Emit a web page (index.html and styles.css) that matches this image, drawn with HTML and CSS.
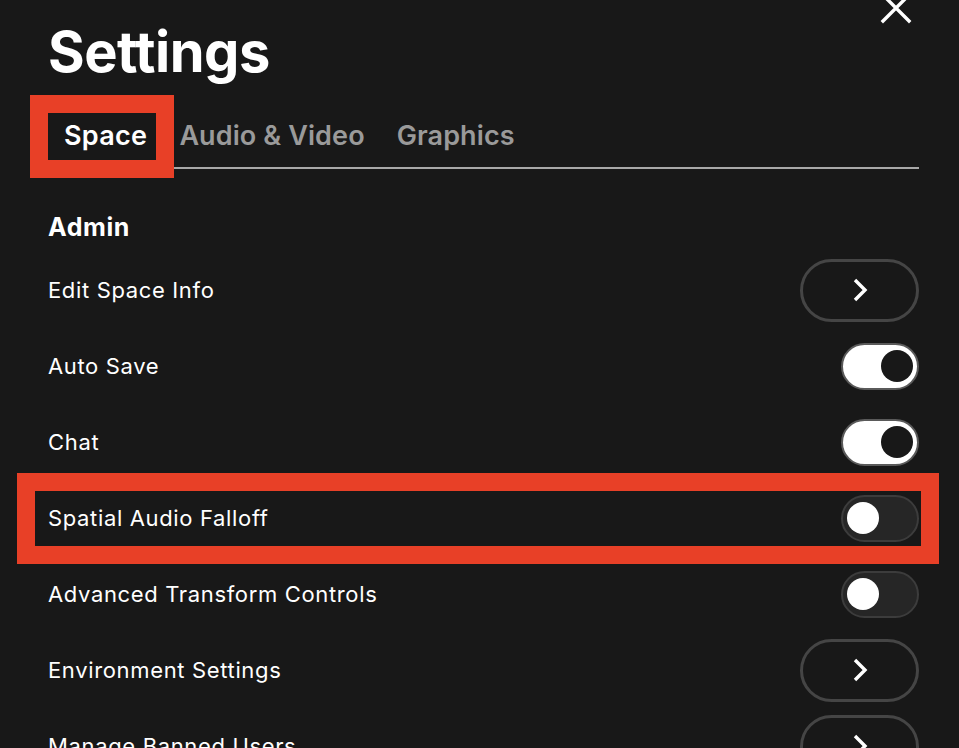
FILE: index.html
```html
<!DOCTYPE html>
<html lang="en">
<head>
<meta charset="utf-8">
<title>Settings</title>
<link rel="stylesheet" href="styles.css">
</head>
<body>
<div class="panel">
  <header class="header">
    <h1 class="title">Settings</h1>
    <button class="close" aria-label="Close">
      <svg viewBox="0 0 32 32" width="32" height="32"><path d="M3 3 L29 29 M29 3 L3 29" stroke="#fff" stroke-width="3.4" stroke-linecap="square" fill="none"/></svg>
    </button>
  </header>
  <nav class="tabs">
    <span class="tab tab-active">Space</span>
    <span class="tab">Audio &amp; Video</span>
    <span class="tab">Graphics</span>
    <div class="mark mark-tab"></div>
  </nav>
  <h2 class="section">Admin</h2>
  <div class="row">
    <span class="label">Edit Space Info</span>
    <button class="nav-btn"><svg viewBox="0 0 16 24" width="16" height="24"><path d="M3 2 L13 12 L3 22" stroke="#fff" stroke-width="3.4" fill="none"/></svg></button>
  </div>
  <div class="row">
    <span class="label">Auto Save</span>
    <span class="toggle on"><span class="knob"></span></span>
  </div>
  <div class="row">
    <span class="label">Chat</span>
    <span class="toggle on"><span class="knob"></span></span>
  </div>
  <div class="row">
    <span class="label">Spatial Audio Falloff</span>
    <span class="toggle"><span class="knob"></span></span>
    <div class="mark mark-row"></div>
  </div>
  <div class="row">
    <span class="label">Advanced Transform Controls</span>
    <span class="toggle"><span class="knob"></span></span>
  </div>
  <div class="row">
    <span class="label">Environment Settings</span>
    <button class="nav-btn"><svg viewBox="0 0 16 24" width="16" height="24"><path d="M3 2 L13 12 L3 22" stroke="#fff" stroke-width="3.4" fill="none"/></svg></button>
  </div>
  <div class="row">
    <span class="label">Manage Banned Users</span>
    <button class="nav-btn"><svg viewBox="0 0 16 24" width="16" height="24"><path d="M3 2 L13 12 L3 22" stroke="#fff" stroke-width="3.4" fill="none"/></svg></button>
  </div>
</div>
</body>
</html>
```

FILE: styles.css
```css
html, body {
  margin: 0;
  padding: 0;
  background: #181818;
  overflow: hidden;
  height: 748px;
}
body {
  font-family: "Inter", "Noto Sans", sans-serif;
  color: #fff;
}
.panel {
  width: 871px;
  margin-left: 48px;
  display: flex;
  flex-direction: column;
}
.header {
  position: relative;
  height: 104px;
}
.title {
  margin: 0;
  font-size: 56px;
  font-weight: 700;
  line-height: 104px;
  letter-spacing: -0.5px;
}
.close {
  position: absolute;
  top: -8px;
  left: 832px;
  width: 32px;
  height: 32px;
  padding: 0;
  border: 0;
  background: none;
}
.close svg { display: block; }
.tabs {
  position: relative;
  display: flex;
  height: 63px;
  border-bottom: 2px solid #a8a8a8;
}
.tab {
  padding: 0 16px;
  font-size: 27px;
  font-weight: 600;
  line-height: 63px;
  letter-spacing: 0.1px;
  color: #9a9a9a;
}
.tab-active {
  color: #fff;
  letter-spacing: 0.3px;
}
.mark {
  position: absolute;
  border: 18px solid #e84027;
  box-sizing: border-box;
  pointer-events: none;
}
.mark-tab {
  left: -18px;
  top: -9px;
  width: 144px;
  height: 83px;
}
.section {
  margin: 0;
  padding: 43px 0 10px;
  font-size: 25px;
  font-weight: 700;
  line-height: 30px;
  letter-spacing: 0.6px;
}
.row {
  position: relative;
  display: flex;
  align-items: center;
  justify-content: space-between;
  height: 76px;
  flex-shrink: 0;
}
.label {
  font-size: 22px;
  font-weight: 400;
  letter-spacing: 0.65px;
}
.mark-row {
  left: -31px;
  top: -7px;
  width: 922px;
  height: 91px;
}
.nav-btn {
  width: 119px;
  height: 63px;
  box-sizing: border-box;
  border: 3px solid #454545;
  border-radius: 32px;
  background: transparent;
  display: flex;
  align-items: center;
  justify-content: center;
  padding: 0;
}
.nav-btn svg { display: block; }
.toggle {
  width: 78px;
  height: 47px;
  box-sizing: border-box;
  border-radius: 24px;
  border: 2px solid #3c3c3c;
  background: #262626;
  display: flex;
  align-items: center;
  padding: 0 4px;
}
.toggle .knob {
  width: 32px;
  height: 32px;
  border-radius: 50%;
  background: #fff;
}
.toggle.on {
  background: #fff;
  border-color: #5a5a5a;
  justify-content: flex-end;
}
.toggle.on .knob {
  background: #181818;
}
```
